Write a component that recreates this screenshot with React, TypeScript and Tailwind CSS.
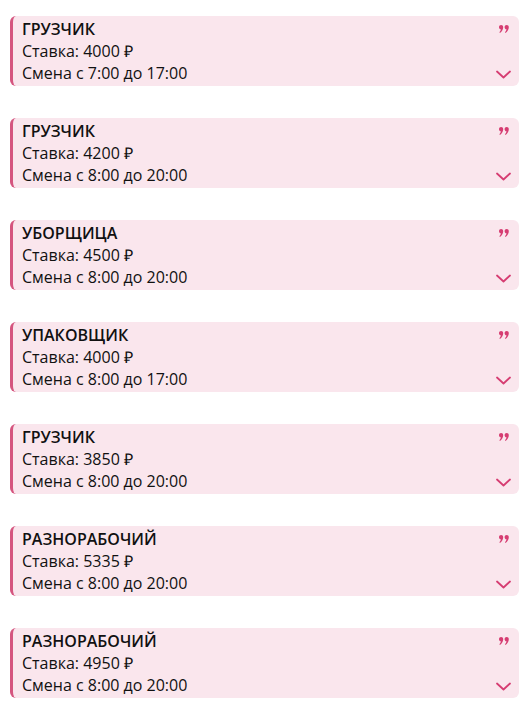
const jobs = [
    { title: "ГРУЗЧИК", rate: "4000", shift: "Смена с 7:00 до 17:00" },
    { title: "ГРУЗЧИК", rate: "4200", shift: "Смена с 8:00 до 20:00" },
    { title: "УБОРЩИЦА", rate: "4500", shift: "Смена с 8:00 до 20:00" },
    { title: "УПАКОВЩИК", rate: "4000", shift: "Смена с 8:00 до 17:00" },
    { title: "ГРУЗЧИК", rate: "3850", shift: "Смена с 8:00 до 20:00" },
    { title: "РАЗНОРАБОЧИЙ", rate: "5335", shift: "Смена с 8:00 до 20:00" },
    { title: "РАЗНОРАБОЧИЙ", rate: "4950", shift: "Смена с 8:00 до 20:00" },
];

export default function App() {
    return (
        <div className="bg-white min-h-[712px] pt-4 flex flex-col gap-8 font-['Open_Sans',sans-serif] text-[#111]">
            {jobs.map((job, i) => (
                <JobCard key={i} {...job} />
            ))}
        </div>
    );
}

function JobCard({ title, rate, shift }: { title: string; rate: string; shift: string }) {
    return (
        <div className="ml-[10px] w-[509px] h-[70px] rounded-md border-l-[3px] border-[#d5557f] bg-[#fae6ed] flex justify-between">
            <div className="pl-[9px] pt-[2px] text-[16px] leading-[22px]">
                <div className="font-semibold">{title}</div>
                <div>Ставка: {rate} ₽</div>
                <div>{shift}</div>
            </div>
            <div className="flex flex-col items-center justify-between pt-[9px] pb-[7px] pr-[7px] w-[24px]">
                <SvgQuote />
                <SvgChevron />
            </div>
        </div>
    );
}

function SvgQuote() {
    return (
        <svg width="10" height="8" viewBox="0 0 10 8" fill="#d63d72">
            <path d="M2.1 0C3.3 0 4.2 0.9 4.2 2.2C4.2 4.4 3 6.4 1 7.9L0.4 7.2C1.3 6.3 1.8 5.4 1.9 4.3C0.8 4.2 0 3.3 0 2.2C0 0.9 0.9 0 2.1 0Z" />
            <path d="M7.7 0C8.9 0 9.8 0.9 9.8 2.2C9.8 4.4 8.6 6.4 6.6 7.9L6 7.2C6.9 6.3 7.4 5.4 7.5 4.3C6.4 4.2 5.6 3.3 5.6 2.2C5.6 0.9 6.5 0 7.7 0Z" />
        </svg>
    );
}

function SvgChevron() {
    return (
        <svg width="15" height="9" viewBox="0 0 15 9" fill="none" stroke="#d63d72" strokeWidth="1.8" strokeLinecap="round" strokeLinejoin="round">
            <path d="M1 1.5L7.5 7.5L14 1.5" />
        </svg>
    );
}
